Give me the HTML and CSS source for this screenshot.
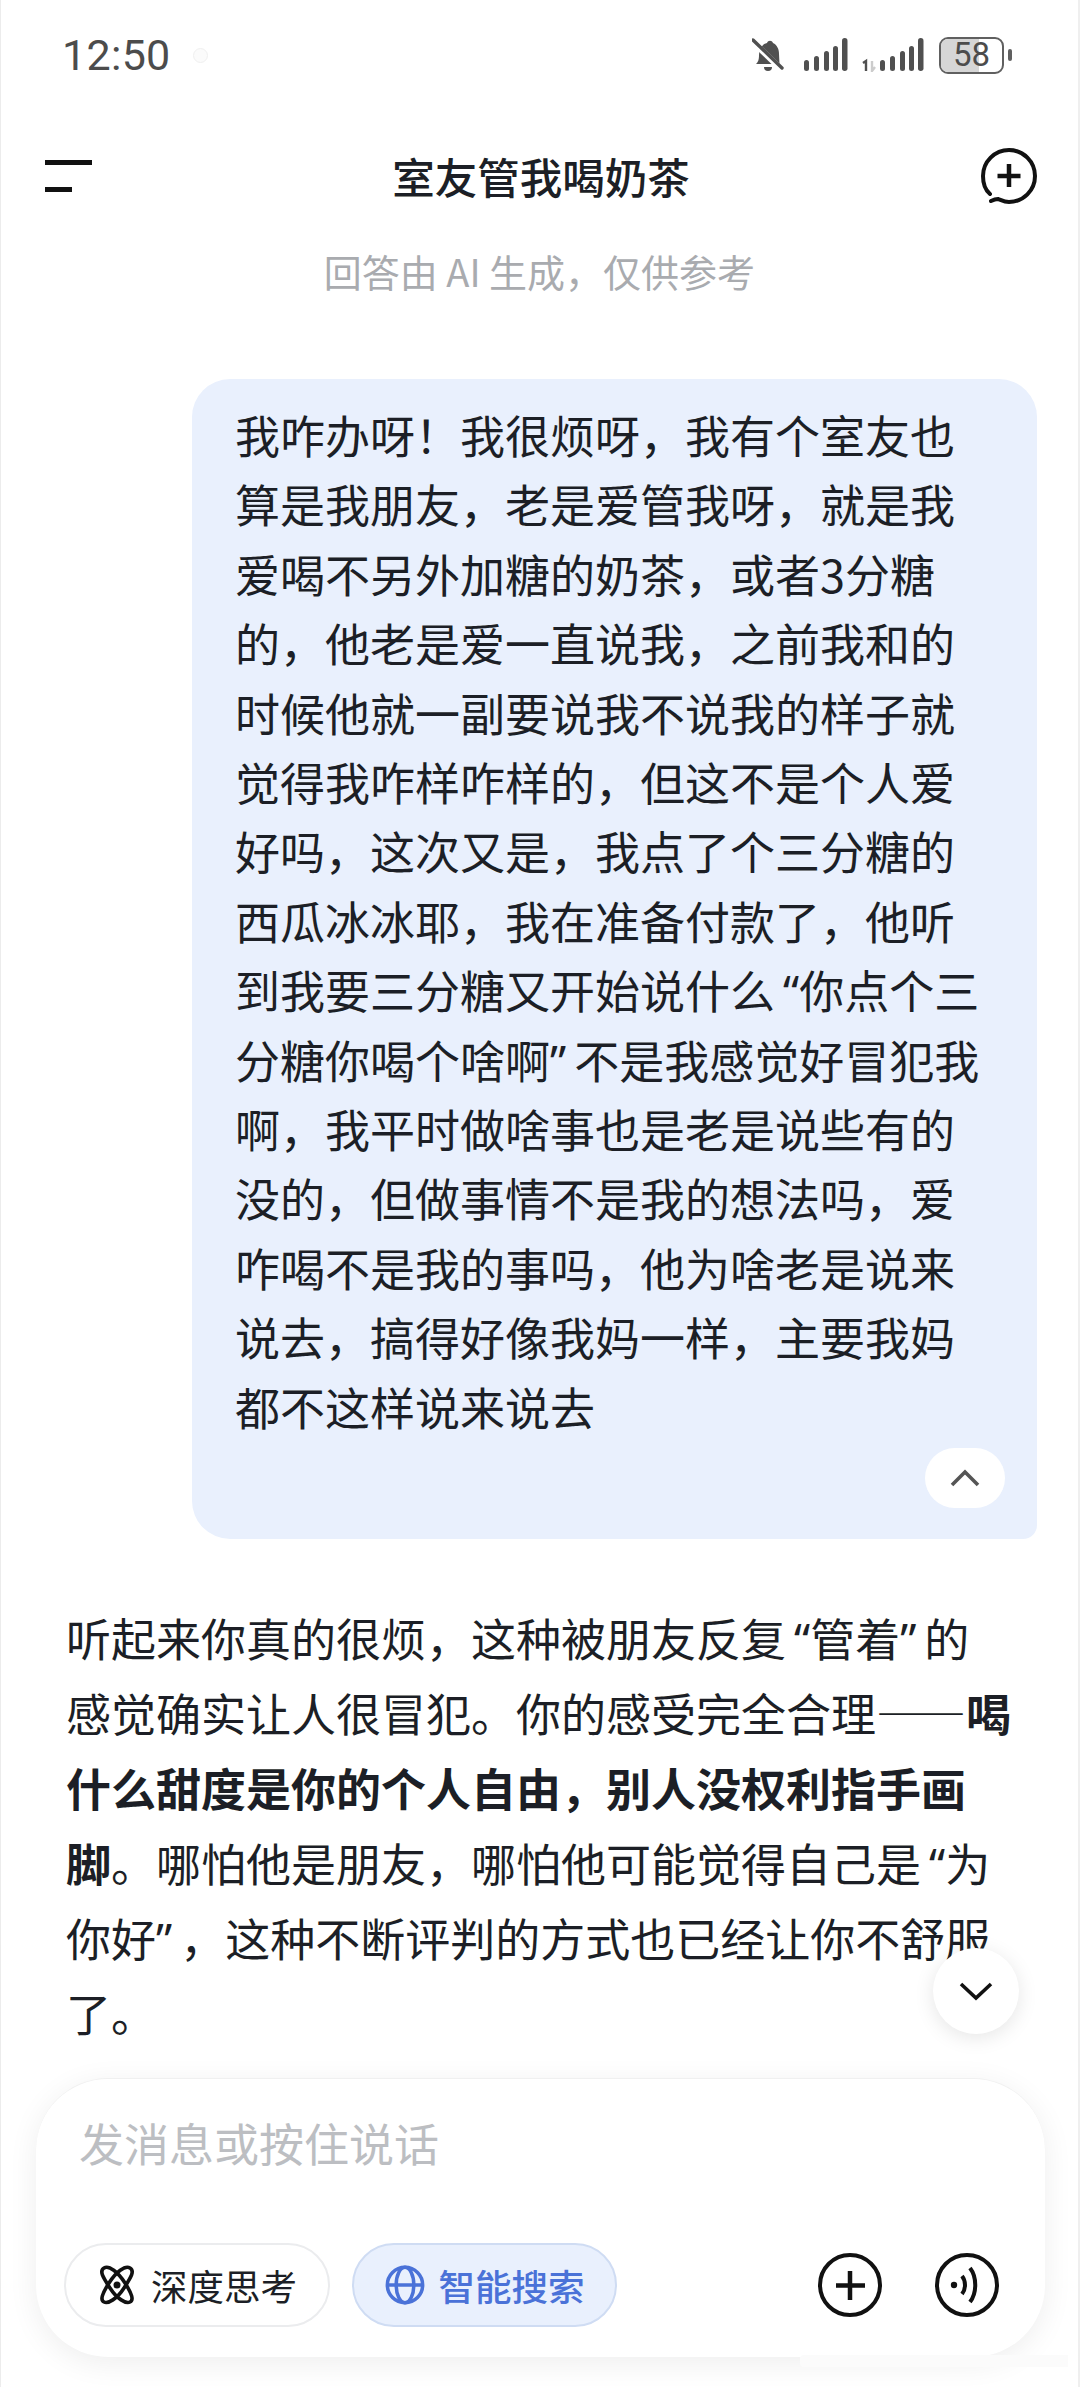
FILE: index.html
```html
<!DOCTYPE html>
<html lang="zh-CN">
<head>
<meta charset="utf-8">
<title>室友管我喝奶茶</title>
<link rel="stylesheet" href="styles.css">
</head>
<body>
<div class="screen">
  <div class="status">
    <div class="status-left">
      <span class="time">12:50</span>
      <span class="dot"></span>
    </div>
    <div class="status-right">
      <svg class="bell" width="32" height="36" viewBox="0 0 32 36"><path d="M4 27c2-2 3-4 3-9 0-6 3-11 8-12 1-3 5-3 6 0 4 2 6 6 6 11l.5 10z" fill="#505050"/><path d="M12 30h8a4 4 0 0 1-8 0z" fill="#505050"/><path d="M1 5l28 27" stroke="#fff" stroke-width="6"/><path d="M1 3l29 28" stroke="#505050" stroke-width="3.4" stroke-linecap="round"/></svg>
      <svg class="sig" width="44" height="34" viewBox="0 0 44 34"><g fill="#505050"><rect x="0" y="22" width="5" height="11" rx="2.5"/><rect x="10" y="18" width="5" height="15" rx="2.5"/><rect x="20" y="13" width="5" height="20" rx="2.5"/><rect x="29" y="8" width="5" height="25" rx="2.5"/><rect x="38" y="0" width="5.5" height="33" rx="2.7"/></g></svg>
      <svg class="sig sig2" width="62" height="34" viewBox="0 0 62 34"><path d="M1 25l3-2v10" stroke="#505050" stroke-width="2.4" fill="none"/><path d="M10 23v10l3-4" stroke="#ccc" stroke-width="2.4" fill="none"/><g fill="#505050"><rect x="18" y="22" width="5" height="11" rx="2.5"/><rect x="28" y="18" width="5" height="15" rx="2.5"/><rect x="38" y="13" width="5" height="20" rx="2.5"/><rect x="47" y="8" width="5" height="25" rx="2.5"/><rect x="56" y="0" width="5.5" height="33" rx="2.7"/></g></svg>
      <div class="battery"><span class="battery-fill"></span><span class="battery-num">58</span></div>
      <span class="battery-cap"></span>
    </div>
  </div>

  <header class="top">
    <svg class="menu" width="48" height="34" viewBox="0 0 48 34"><rect x="0" y="1" width="47" height="5" fill="#111"/><rect x="0" y="28" width="27" height="5" fill="#111"/></svg>
    <h1 class="title">室友管我喝奶茶</h1>
    <svg class="newchat" width="56" height="56" viewBox="0 0 56 56"><path d="M9 46C3 41 2 34 2 28a26 26 0 1 1 26 26c-5 0-8-2-11-3-3 0-5 1-7 2" fill="none" stroke="#111" stroke-width="4" stroke-linecap="round"/><path d="M28 16v23M16.500 28h23" stroke="#111" stroke-width="4.500"/></svg>
  </header>
  <p class="notice">回答由 AI 生成，仅供参考</p>

  <main class="chat">
    <section class="bubble">
      <p class="bubble-text">我咋办呀！我很烦呀，我有个室友也<br>算是我朋友，老是爱管我呀，就是我<br>爱喝不另外加糖的奶茶，或者3分糖<br>的，他老是爱一直说我，之前我和的<br>时候他就一副要说我不说我的样子就<br>觉得我咋样咋样的，但这不是个人爱<br>好吗，这次又是，我点了个三分糖的<br>西瓜冰冰耶，我在准备付款了，他听<br>到我要三分糖又开始说什么<span class="q-open">“</span>你点个三<br>分糖你喝个啥啊<span class="q-close">”</span>不是我感觉好冒犯我<br>啊，我平时做啥事也是老是说些有的<br>没的，但做事情不是我的想法吗，爱<br>咋喝不是我的事吗，他为啥老是说来<br>说去，搞得好像我妈一样，主要我妈<br>都不这样说来说去</p>
      <div class="collapse-row">
        <button class="collapse"><svg width="30" height="18" viewBox="0 0 30 18"><path d="M2 16L15 3l13 13" fill="none" stroke="#555" stroke-width="3.600"/></svg></button>
      </div>
    </section>
    <p class="answer">听起来你真的很烦，这种被朋友反复<span class="q-open">“</span>管着<span class="q-close">”</span>的<br>感觉确实让人很冒犯。你的感受完全合理——<b>喝</b><br><b>什么甜度是你的个人自由，别人没权利指手画</b><br><b>脚</b>。哪怕他是朋友，哪怕他可能觉得自己是<span class="q-open">“</span>为<br>你好<span class="q-close">”</span>，这种不断评判的方式也已经让你不舒服<br>了。</p>
    <button class="scroll-down"><svg width="34" height="20" viewBox="0 0 34 20"><path d="M2 3l15 14L32 3" fill="none" stroke="#111" stroke-width="3.600"/></svg></button>
  </main>

  <footer class="composer">
    <p class="placeholder">发消息或按住说话</p>
    <div class="tools">
      <button class="pill">
        <svg width="40" height="40" viewBox="0 0 36 40"><g fill="none" stroke="#111" stroke-width="3.600"><path d="M5 3c5-3 14 4 21 15s9 17 5 19-13-3-20-14S0 6 5 3z"/><path d="M31 3c-5-3-14 4-21 15S1 35 5 37s13-3 20-14S36 6 31 3z"/></g><circle cx="18" cy="20" r="3.500" fill="#111"/></svg>
        <span>深度思考</span>
      </button>
      <button class="pill pill-on">
        <svg width="40" height="40" viewBox="0 0 34 34"><g fill="none" stroke="#4a72d8" stroke-width="3"><circle cx="17" cy="17" r="15"/><ellipse cx="17" cy="17" rx="7.500" ry="15"/><path d="M2 17h30"/></g></svg>
        <span>智能搜索</span>
      </button>
      <span class="spacer"></span>
      <svg class="round" width="64" height="64" viewBox="0 0 64 64"><circle cx="32" cy="32" r="30" fill="none" stroke="#111" stroke-width="4"/><path d="M32 18v29M18 32.500h29" stroke="#111" stroke-width="4.500"/></svg>
      <svg class="round" width="64" height="64" viewBox="0 0 64 64"><circle cx="32" cy="32" r="30" fill="none" stroke="#111" stroke-width="4"/><circle cx="19" cy="32" r="3.200" fill="#111"/><path d="M27 23c4 5 4 13 0 18" fill="none" stroke="#111" stroke-width="4"/><path d="M35 15c7 9 7 25 0 34" fill="none" stroke="#111" stroke-width="4"/></svg>
    </div>
  </footer>
  <div class="bottom-strip"><span class="home"></span></div>
</div>
</body>
</html>
```

FILE: styles.css
```css
* { box-sizing: border-box; }
html, body { margin: 0; padding: 0; background: #fff; }
body {
  font-family: "Noto Sans CJK SC", "Noto Sans", sans-serif;
  color: #1c1f26;
}
button { padding: 0; border: 0; font: inherit; }
.screen {
  position: relative;
  width: 1080px;
  height: 2387px;
  overflow: hidden;
  background: #fff;
  border-left: 1px solid #ececec;
  border-right: 2px solid #efefef;
  display: flex;
  flex-direction: column;
}

.status {
  height: 136px;
  padding: 30px 66px 0 61px;
  display: flex;
  justify-content: space-between;
  align-items: flex-start;
}
.status-left { display: flex; align-items: center; gap: 22px; height: 50px; }
.time { font-family: Roboto, sans-serif; font-size: 43px; color: #4c4c4c; line-height: 50px; letter-spacing: .3px; }
.dot { width: 15px; height: 15px; border-radius: 50%; border: 1px solid #f0f0f0; background: #fbfbfb; }
.status-right { display: flex; align-items: center; height: 50px; }
.bell { margin-right: 20px; }
.sig2 { margin-left: 14px; }
.battery {
  position: relative;
  width: 65px;
  height: 37px;
  margin-left: 15px;
  border: 2.5px solid #606060;
  border-radius: 9px;
  overflow: hidden;
  display: flex;
  align-items: center;
  justify-content: center;
}
.battery-fill { position: absolute; left: 0; top: 0; bottom: 0; width: 62%; background: #d6d6d6; }
.battery-num { position: relative; font-family: Roboto, sans-serif; font-size: 33px; line-height: 32px; color: #4c4c4c; }
.battery-cap { width: 4px; height: 12px; margin-left: 4px; border-radius: 2px; background: #606060; }

.top {
  height: 80px;
  padding: 0 41px 0 44px;
  display: grid;
  grid-template-columns: 1fr auto 1fr;
  align-items: center;
}
.newchat { justify-self: end; }
.title {
  margin: 0;
  font-size: 42.5px;
  font-weight: 500;
  color: #1c1f26;
  line-height: 60px;
}
.notice {
  margin: 27px 0 0;
  text-align: center;
  font-size: 38px;
  line-height: 56px;
  color: #a9abaf;
}

.chat {
  position: relative;
  flex: 1;
  min-height: 0;
  overflow: hidden;
  padding-top: 80px;
}
.bubble {
  margin-left: 191px;
  width: 845px;
  height: 1160px;
  padding: 21px 32px 0 43px;
  background: #e9f0fd;
  border-radius: 38px 38px 14px 38px;
}
.bubble-text {
  margin: 0;
  font-size: 45px;
  line-height: 69.4px;
  white-space: nowrap;
  color: #1c1f26;
}
.q-open, .q-close { font-family: "Noto Sans", sans-serif; line-height: 0; }
.q-open { margin-left: 8px; }
.q-close { margin-right: 8px; }
.collapse-row { display: flex; justify-content: flex-end; margin-top: 7px; }
.collapse {
  width: 80px;
  height: 60px;
  border-radius: 30px;
  background: #fff;
  display: flex;
  align-items: center;
  justify-content: center;
}
.answer {
  margin: 61px 0 0 65px;
  font-size: 45px;
  line-height: 75px;
  white-space: nowrap;
  color: #1c1f26;
}
.answer b { font-weight: 700; }
.scroll-down {
  position: absolute;
  left: 932px;
  top: 1649px;
  width: 86px;
  height: 86px;
  border-radius: 50%;
  background: #fff;
  box-shadow: 0 4px 20px rgba(0,0,0,.1);
  display: flex;
  align-items: center;
  justify-content: center;
}

.composer {
  flex: none;
  margin: 0 33px 30px 35px;
  height: 279px;
  padding: 30px 46px 30px 28px;
  background: #fff;
  border-radius: 72px;
  border-top: 1px solid #f0f0f0;
  box-shadow: 0 6px 30px rgba(0,0,0,.07);
  display: flex;
  flex-direction: column;
  justify-content: space-between;
  position: relative;
}
.placeholder {
  margin: 0 0 0 15px;
  font-size: 45px;
  line-height: 68px;
  color: #bcbec2;
}
.tools { display: flex; align-items: center; gap: 22px; }
.spacer { flex: 1; }
.round { margin-left: 31px; }
.round:first-of-type { margin-left: 0; }
.pill {
  height: 84px;
  width: 266px;
  border-radius: 42px;
  border: 2px solid #ebecee;
  background: #fff;
  display: flex;
  align-items: center;
  justify-content: center;
  gap: 14px;
  font-size: 36.5px;
  color: #1c1f26;
  font-family: inherit;
}
.pill-on {
  width: 265px;
  background: #e9f0fd;
  border-color: #cfdcf3;
  color: #4a72d8;
  font-weight: 500;
}
.bottom-strip {
  position: absolute;
  left: 0;
  right: 0;
  bottom: 0;
  height: 33px;
}
.home {
  position: absolute;
  left: 799px;
  top: 1px;
  width: 268px;
  height: 12px;
  border-radius: 4px 0 0 4px;
  background: #fbfbfb;
}
```
